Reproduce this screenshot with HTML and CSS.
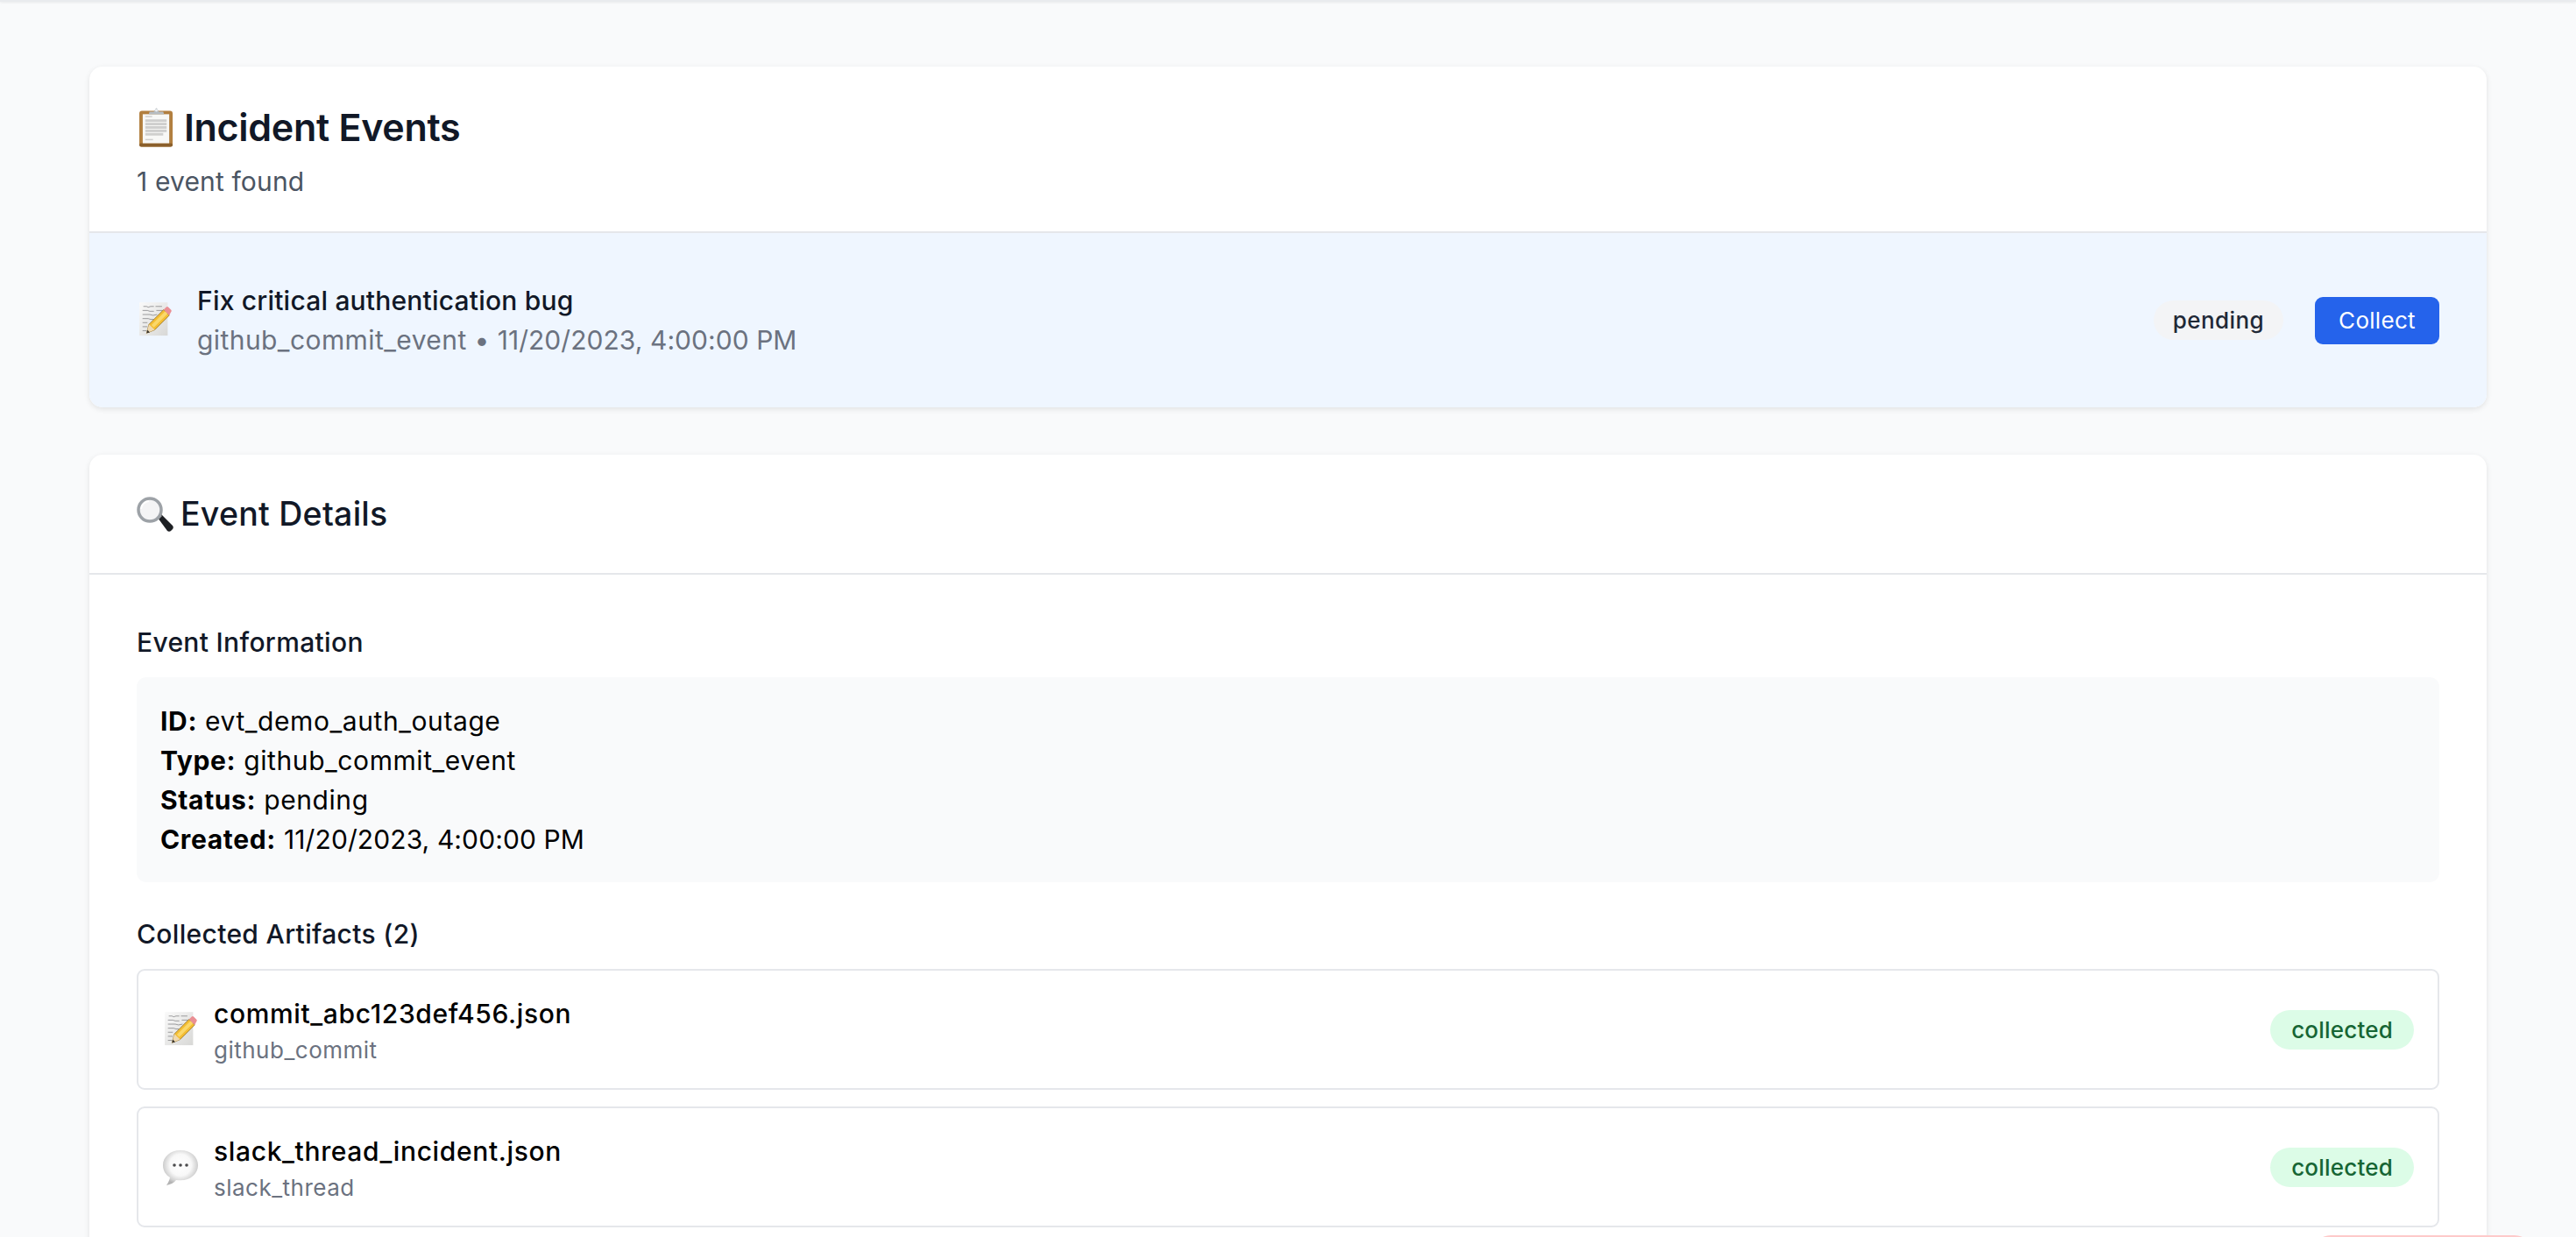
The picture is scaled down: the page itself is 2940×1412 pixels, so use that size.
FILE: index.html
```html
<!DOCTYPE html>
<html lang="en">
<head>
<meta charset="utf-8">
<title>Incident Events</title>
<link rel="stylesheet" href="styles.css">
</head>
<body>
<svg class="defs" width="0" height="0" aria-hidden="true">
  <defs>
    <radialGradient id="bubble" cx=".5" cy=".42" r=".56">
      <stop offset="0" stop-color="#ffffff"/>
      <stop offset=".55" stop-color="#f8f8f8"/>
      <stop offset=".85" stop-color="#d2d2d2"/>
      <stop offset="1" stop-color="#b4b4b4"/>
    </radialGradient>
    <linearGradient id="page" x1="0" y1="0" x2="1" y2="1">
      <stop offset="0" stop-color="#fafafa"/>
      <stop offset="1" stop-color="#d8d8d6"/>
    </linearGradient>
    <symbol id="memo" viewBox="0 0 40 44">
      <rect x="0" y="0" width="35" height="41" fill="url(#page)"/>
      <g stroke="#77777a" stroke-width="1" fill="none" opacity=".75">
        <path d="M5 5h4l2 1 3-1h4M20 5h8M4 10h6l3 1h5M21 10h8M4 15h9l4 1 5-1M4 20h7l3 1h4M4 25h6M4 30h6M4 35h5"/>
      </g>
      <path d="M9 38l3-11L30 9l7 7-18 18z" fill="#f3bd32" stroke="#8f6b22" stroke-width=".8"/>
      <path d="M15 28l17-17 3 3-17 17z" fill="#fbd86a"/>
      <path d="M30 9l3-3c1-1 2-1 3 0l3 3c1 1 1 2 0 3l-2 4z" fill="#ea8f94"/>
      <path d="M9 38l3-11 7 7z" fill="#efd9b0"/>
      <path d="M9 38l1-4 3 3z" fill="#38332e"/>
    </symbol>
    <symbol id="clip" viewBox="0 0 40 46">
      <rect x="0" y="4" width="39" height="42" rx="3" fill="#b27f3f"/>
      <rect x="0" y="42" width="39" height="4" rx="2" fill="#8a5f2b"/>
      <rect x="4" y="8" width="31" height="34" fill="#f8f8f6"/>
      <g fill="#cfcfce">
        <rect x="7" y="14" width="25" height="3"/>
        <rect x="7" y="18" width="25" height="3"/>
        <rect x="7" y="22" width="25" height="3"/>
        <rect x="7" y="26" width="25" height="3"/>
        <rect x="7" y="30" width="21" height="3"/>
        <rect x="7" y="10" width="8" height="1.500"/>
        <rect x="7" y="37" width="9" height="1.500"/>
      </g>
      <path d="M11 8l1-3h5l2.500-4h1l2.500 4h5l1 3z" fill="#b7bdc2"/>
      <circle cx="20" cy="3.500" r="1.500" fill="#eef0f2"/>
    </symbol>
    <symbol id="glass" viewBox="0 0 42 40">
      <path d="M24 24l4-4 13 13c1 1 1 3 0 4l-2 2c-1 1-3 1-4 0z" fill="#1e2024"/>
      <path d="M22 22l3-3 4 3-4 4z" fill="#8d8f92"/>
      <circle cx="15" cy="15" r="13" fill="#f4f4f5" stroke="#9da2a7" stroke-width="3.500"/>
      <path d="M5 14a10 10 0 0 1 9-9" fill="none" stroke="#ffffff" stroke-width="2"/>
    </symbol>
    <symbol id="speech" viewBox="0 0 42 42">
      <path d="M21 1C9.500 1 1 8.500 1 18c0 6 3 11 8 14-.5 3-2 6-4 9 5-1 9-3 11-6 1.500.2 3.500.3 5 .3 11.500 0 20-7.500 20-17.300S32.500 1 21 1z" fill="url(#bubble)"/>
      <circle cx="14" cy="18" r="1.800" fill="#4b4b4d"/>
      <circle cx="21" cy="18" r="1.800" fill="#4b4b4d"/>
      <circle cx="28" cy="18" r="1.800" fill="#4b4b4d"/>
    </symbol>
  </defs>
</svg>
<div class="topbar"></div>
<main class="page">
  <section class="card">
    <header class="list-head">
      <h1 class="title"><svg class="ico-clip"><use href="#clip"/></svg>Incident Events</h1>
      <p class="count">1 event found</p>
    </header>
    <div class="event">
      <svg class="ico-memo"><use href="#memo"/></svg>
      <div class="event-main">
        <div class="event-name">Fix critical authentication bug</div>
        <div class="event-meta">github_commit_event • <span class="date">11/20/2023, 4:00:00 PM</span></div>
      </div>
      <span class="pill pill-pending">pending</span>
      <button class="collect" type="button">Collect</button>
    </div>
  </section>
  <section class="card">
    <header class="detail-head">
      <h2 class="subtitle"><svg class="ico-glass"><use href="#glass"/></svg>Event Details</h2>
    </header>
    <div class="detail-body">
      <h3 class="section">Event Information</h3>
      <div class="info">
        <div><strong>ID:</strong> evt_demo_auth_outage</div>
        <div><strong>Type:</strong> github_commit_event</div>
        <div><strong>Status:</strong> pending</div>
        <div><strong>Created:</strong> <span class="date">11/20/2023, 4:00:00 PM</span></div>
      </div>
      <h3 class="section section-art">Collected Artifacts (2)</h3>
      <div class="artifacts">
        <div class="artifact artifact-memo">
          <svg class="ico-art-memo"><use href="#memo"/></svg>
          <div class="art-main">
            <div class="art-name">commit_abc123def456.json</div>
            <div class="art-type">github_commit</div>
          </div>
          <span class="pill pill-ok">collected</span>
        </div>
        <div class="artifact artifact-speech">
          <svg class="ico-art-speech"><use href="#speech"/></svg>
          <div class="art-main">
            <div class="art-name">slack_thread_incident.json</div>
            <div class="art-type">slack_thread</div>
          </div>
          <span class="pill pill-ok">collected</span>
        </div>
      </div>
    </div>
  </section>
</main>
<div class="toast"></div>
</body>
</html>
```
FILE: styles.css
```css
* { box-sizing: border-box; }
html, body { margin: 0; height: 100%; overflow: hidden; }
body {
  background: #f9fafb;
  font-family: Inter, "Liberation Sans", sans-serif;
  color: #111827;
  position: relative;
}
.defs { position: absolute; }
.topbar {
  height: 2px;
  background: #e9ebee;
  box-shadow: 0 1px 3px rgba(0,0,0,.08);
}
.page {
  width: 2736px;
  margin: 74px auto 0;
  display: flex;
  flex-direction: column;
  gap: 54px;
}
.card {
  background: #fff;
  border-radius: 15px;
  box-shadow: 0 2px 6px rgba(0,0,0,.1);
  overflow: hidden;
}
.list-head {
  height: 190px;
  padding: 39px 54px 0;
  border-bottom: 2px solid #e5e7eb;
}
.title {
  margin: 0;
  display: flex;
  align-items: center;
  gap: 12px;
  font-size: 43px;
  line-height: 60px;
  font-weight: 600;
  letter-spacing: -.3px;
}
.ico-clip { width: 39px; height: 46px; margin-left: 3px; flex: none; }
.count {
  margin: 10px 0 0;
  font-size: 30px;
  line-height: 45px;
  letter-spacing: .15px;
  color: #4b5563;
}
.event {
  height: 199px;
  display: flex;
  align-items: center;
  padding: 0 54px 0 57px;
  background: #eff6ff;
}
.ico-memo { width: 37px; height: 41px; margin-right: 29px; flex: none; }
.event-main { flex: 1; }
.event-name { font-size: 30px; line-height: 45px; font-weight: 500; letter-spacing: .2px; }
.event-meta { font-size: 30px; line-height: 45px; letter-spacing: .42px; color: #6b7280; }
.date { letter-spacing: .05px; }
.pill {
  display: inline-block;
  height: 45px;
  line-height: 45px;
  border-radius: 23px;
  font-size: 26px;
  font-weight: 450;
  letter-spacing: .4px;
}
.pill-pending { padding: 0 22px; background: #f3f4f6; color: #1f2937; }
.pill-ok { padding: 0 24px; letter-spacing: .2px; background: #dcfce7; color: #166534; }
.collect {
  margin-left: 36px;
  width: 142px;
  height: 54px;
  border: 0;
  padding: 0;
  border-radius: 9px;
  background: #2563eb;
  color: #fff;
  font: 400 26px Inter, "Liberation Sans", sans-serif;
  letter-spacing: .3px;
}
.detail-head {
  height: 137px;
  padding: 0 54px;
  display: flex;
  align-items: center;
  border-bottom: 2px solid #e5e7eb;
}
.subtitle {
  margin: 0;
  display: flex;
  align-items: center;
  gap: 8px;
  font-size: 37.500px;
  line-height: 56px;
  font-weight: 500;
  letter-spacing: .25px;
}
.ico-glass { width: 42px; height: 40px; flex: none; }
.detail-body { padding: 55px 54px 54px; }
.section {
  margin: 0;
  font-size: 30px;
  line-height: 45px;
  font-weight: 500;
  letter-spacing: .33px;
}
.info {
  margin-top: 17px;
  height: 234px;
  padding: 28px 27px;
  background: #f9fafb;
  border-radius: 11px;
  font-size: 30px;
  line-height: 45px;
  letter-spacing: .58px;
  color: #000;
}
.info strong { font-weight: 700; letter-spacing: .65px; }
.info .date { letter-spacing: .1px; }
.section-art { margin-top: 37px; }
.artifacts {
  margin-top: 17px;
  display: flex;
  flex-direction: column;
  gap: 19px;
}
.artifact {
  height: 138px;
  display: flex;
  align-items: center;
  border: 2px solid #e5e7eb;
  border-radius: 9px;
}
.artifact-memo { padding: 0 27px 0 30px; }
.artifact-speech { padding: 0 27px 0 27px; }
.ico-art-memo { width: 37px; height: 41px; margin-right: 19px; flex: none; }
.ico-art-speech { width: 42px; height: 42px; margin-right: 17px; margin-top: 2px; flex: none; }
.art-main { flex: 1; padding-top: 2px; }
.art-name { font-size: 30px; line-height: 45px; font-weight: 500; letter-spacing: .64px; color: #000; }
.art-type { font-size: 26px; line-height: 37px; letter-spacing: .5px; color: #6b7280; }
.toast {
  position: absolute;
  left: 2640px;
  top: 1410px;
  width: 250px;
  height: 30px;
  border-radius: 20px 20px 0 0;
  background: #fecaca;
}
```
